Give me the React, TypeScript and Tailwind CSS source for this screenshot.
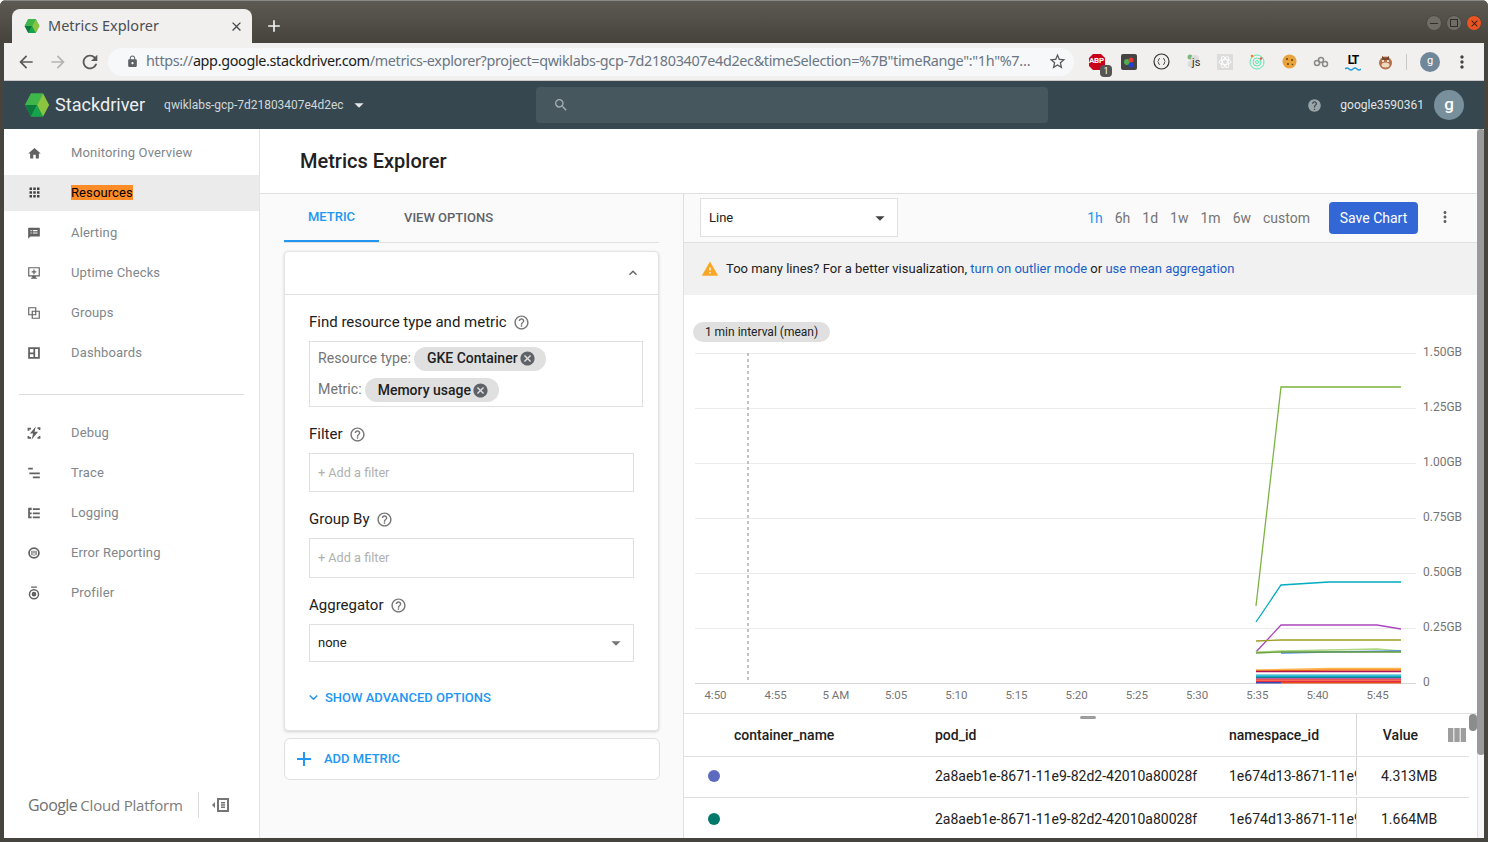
import React from "react";
import { MdHome, MdApps, MdArrowDropDown, MdHelp, MdHelpOutline, MdSearch, MdCancel, MdExpandLess, MdExpandMore, MdAdd, MdMoreVert, MdWarning, MdViewColumn, MdArrowBack, MdArrowForward, MdRefresh, MdLock, MdStarBorder, MdClose } from "react-icons/md";

const Cube = ({ s }: { s: number }) => (
  <svg width={s} height={s} viewBox="0 0 26 26">
    <polygon points="7,1.5 19,1.5 25,13 19,24.5 7,24.5 1,13" fill="#34a853" />
    <polygon points="13,13 19,1.5 25,13 19,24.5" fill="#8bc53f" />
    <polygon points="1,13 7,1.5 19,1.5 13,13" fill="#3fb54a" />
    <polygon points="1,13 13,13 7,24.5" fill="#0b7a3e" />
    <polygon points="7,24.5 13,13 19,24.5" fill="#16a34a" />
  </svg>
);

const G = ({ d }: { d: string }) => (
  <svg width="14" height="14" viewBox="0 0 24 24" fill="#616161" fillRule="evenodd"><path d={d} /></svg>
);

const navTop: [string, React.ReactNode][] = [
  ["Monitoring Overview", <MdHome size={15} color="#616161" />],
  ["Resources", <MdApps size={15} color="#424242" />],
  ["Alerting", <G d="M3 3h18a1 1 0 0 1 1 1v13a1 1 0 0 1-1 1H6l-4 4V4a1 1 0 0 1 1-1zM6 7v2h2V7zM10 7v2h8V7zM6 11v2h2v-2zM10 11v2h8v-2z" />],
  ["Uptime Checks", <G d="M2 2h20v16h-7v2h2v2H7v-2h2v-2H2zM4 4v12h16V4zM11 6h2v3h3v2h-3v3h-2v-3H8V9h3z" />],
  ["Groups", <G d="M2 2h14v6h6v14H8v-6H2zM4 4v10h4V8h6V4zM10 10v4h4v-4zM16 10v6h-6v4h10V10z" />],
  ["Dashboards", <G d="M2 2h20v20H2zM5 5v6h6V5zM5 14v5h6v-5zM14 5v14h5V5z" />],
];
const navBottom: [string, React.ReactNode][] = [
  ["Debug", <G d="M15 1 5 13h5.500L8 23l11-13h-6zM1 3h6v3H4v2H1zM18 2h5v5h-3V5h-2zM1 17h3v2h3v3H1zM20 17h3v5h-5v-3h2z" />],
  ["Trace", <G d="M2 3h8v3H2zM4 11h18v3H4zM10 18h12v3H10z" />],
  ["Logging", <G d="M2 3h6v4H5v4h3v3H5v4h3v3H2zM10 4h12v3H10zM10 11h12v3H10zM10 18h12v3H10z" />],
  ["Error Reporting", <G d="M12 2a10 10 0 1 1 0 20 10 10 0 0 1 0-20zm0 3a7 7 0 1 0 0 14 7 7 0 0 0 0-14zM11 8h2v5h-2zM11 14.500h2v2h-2zM7.500 8h2v8h-2zM14.500 8h2v8h-2z" />],
  ["Profiler", <G d="M7 1h10v2H7zM12 5a9 9 0 1 1 0 18 9 9 0 0 1 0-18zm0 2.500a6.500 6.500 0 1 0 0 13 6.500 6.500 0 0 0 0-13zM12 10a4 4 0 1 1 0 8 4 4 0 0 1 0-8z" />],
];

const NavItem = ({ label, icon }: { label: string; icon: React.ReactNode }) => {
  const active = label === "Resources";
  return (
    <div className={active ? "h-9 my-0.5 pb-[2px] flex items-center bg-[#ebebeb]" : "h-10 flex items-center"}>
      <div className="w-[67px] pl-[23px] flex shrink-0">{icon}</div>
      {active ? (
        <span className="bg-[#ff8c27] text-black leading-[15px] text-[13px] tracking-[0.1px]">{label}</span>
      ) : (
        <span className="text-[#80868b] text-[13px] tracking-[0.15px]">{label}</span>
      )}
    </div>
  );
};

const Help = () => <MdHelpOutline size={17} color="#757575" className="ml-[6px]" />;

const Chip = ({ label }: { label: string }) => (
  <span className="h-6 rounded-full bg-[#e0e0e0] pl-[13px] pr-[10px] flex items-center text-[14px] text-[#212121] ml-[3px] [font-weight:500]">
    {label}
    <MdCancel size={17} color="#5f6368" className="ml-[1px]" />
  </span>
);

const FieldBox = ({ text, h }: { text: string; h: string }) => (
  <div className={`w-[325px] ${h} bg-white border border-[#e0e0e0] flex items-center pl-2 text-[12.700px] text-[#b0b0b0]`}>{text}</div>
);

const Ext = ({ children }: { children: React.ReactNode }) => (
  <div className="w-8 h-5 flex items-center justify-center relative">{children}</div>
);

const yLabels = ["1.50GB", "1.25GB", "1.00GB", "0.75GB", "0.50GB", "0.25GB", "0"];
const xLabels = ["4:50", "4:55", "5 AM", "5:05", "5:10", "5:15", "5:20", "5:25", "5:30", "5:35", "5:40", "5:45"];
const stack = ["#26a69a", "#29b6f6", "#00acc1", "#00897b", "#5c6bc0", "#ec407a", "#e53935", "#ff7043", "#d81b60", "#f4511e"];

const Chart = () => (
  <svg width="793" height="371" viewBox="684 342 793 371" className="block">
    {[353, 408, 463, 518, 573, 628].map((y) => (
      <line key={y} x1="695" x2="1416" y1={y + 0.5} y2={y + 0.5} stroke="#ececec" />
    ))}
    <line x1="695" x2="1416" y1="683.5" y2="683.5" stroke="#d6d6d6" />
    <line x1="748" x2="748" y1="353" y2="683" stroke="#b0b0b0" strokeWidth="1.500" strokeDasharray="3 3" />
    {yLabels.map((t, i) => (
      <text key={t} x="1423" y={356 + i * 55} fontSize="12" fill="#757575" fontFamily="Roboto">{t}</text>
    ))}
    {xLabels.map((t, i) => (
      <text key={t} x={715.5 + i * 60.2} y="699" fontSize="11.500" fill="#757575" fontFamily="Roboto" textAnchor="middle">{t}</text>
    ))}
    <g fill="none" strokeWidth="1.300">
      <polyline points="1256,606 1281,387 1401,387" stroke="#7cb342" />
      <polyline points="1256,622 1281,585 1329,582 1401,582" stroke="#00acc1" />
      <polyline points="1256,652 1281,625 1377,625 1401,629" stroke="#ab47bc" />
      <polyline points="1256,641 1281,640 1401,640" stroke="#9e9d24" />
      <polyline points="1256,652 1281,651 1377,649 1401,651" stroke="#aed581" />
      <polyline points="1281,653 1329,652 1401,651" stroke="#4285f4" />
      <polyline points="1256,653 1281,652 1329,652 1401,652" stroke="#689f38" />
      <polyline points="1256,670 1329,668.500 1401,668.500" stroke="#ffb74d" />
      <polyline points="1256,671 1329,670 1401,670" stroke="#f57c00" />
      <polyline points="1256,671.500 1401,671.500" stroke="#ad1457" />
    </g>
    {stack.map((c, i) => (
      <rect key={c} x="1256" y={674.5 + i * 0.8} width="145" height="1.100" fill={c} />
    ))}
    <rect x="1256" y="682" width="25" height="1.500" fill="#3949ab" />
    <rect x="1281" y="682" width="120" height="1.500" fill="#e64a19" />
  </svg>
);

const rows: [string, string, string][] = [
  ["#5c6bc0", "4.313MB", "h-[41px] pb-[2px]"],
  ["#00796b", "1.664MB", "h-[43px]"],
];

export default function App() {
  return (
    <div className="w-[1488px] h-[842px] overflow-hidden flex flex-col bg-[#46443e] [font-family:Roboto,sans-serif] rounded-t-md">
      {/* title bar */}
      <div className="h-[43px] shrink-0 flex items-end bg-gradient-to-b from-[#5c5a52] to-[#45433c] border-t border-[#8a8a86] pl-3 pr-[6px] relative">
        <div className="w-[240px] h-[34px] bg-[#f1f0ef] rounded-t-lg flex items-center pl-3 pr-2">
          <Cube s={16} />
          <span className="ml-2 text-[14.500px] text-[#4a4f55] [font-family:'Noto_Sans',sans-serif] flex-1">Metrics Explorer</span>
          <MdClose size={15} color="#45474a" />
        </div>
        <MdAdd size={20} color="#f2f2f2" className="ml-3 mb-[7px]" />
        <div className="flex-1" />
        <div className="flex items-center gap-[4px] mb-[12px]">
          <span className="w-4 h-4 rounded-full bg-[#6f6d66] border border-[#4a4842] flex items-center justify-center"><span className="w-2 h-px bg-[#2f2e2a]" /></span>
          <span className="w-4 h-4 rounded-full bg-[#6f6d66] border border-[#4a4842] flex items-center justify-center"><span className="w-2 h-2 border border-[#2f2e2a]" /></span>
          <span className="w-4 h-4 rounded-full bg-[#e95420] border border-[#4a4842] flex items-center justify-center"><MdClose size={11} color="#3b2417" /></span>
        </div>
      </div>

      <div className="flex-1 mx-1 mb-1 flex flex-col min-h-0 bg-white overflow-hidden">
        {/* browser toolbar */}
        <div className="h-[38px] shrink-0 bg-[#f1f0ef] border-b border-[#c9c9c9] flex items-center">
          <MdArrowBack size={20} color="#5a5a5a" className="ml-3" />
          <MdArrowForward size={20} color="#b4b4b4" className="ml-3" />
          <MdRefresh size={22} color="#5a5a5a" className="ml-[11px]" />
          <div className="ml-[7px] w-[966px] h-7 rounded-full bg-[#f7f8fa] flex items-center pl-[18px] text-[14.400px] [font-family:'Noto_Sans',sans-serif] overflow-hidden whitespace-nowrap">
            <MdLock size={13} color="#5f6368" className="shrink-0" />
            <span className="ml-[7px] mb-[2px] w-[888px] overflow-hidden text-[#6b7683] tracking-[-0.340px]">
              https://<span className="text-[#1c1c1c]">app.google.stackdriver.com</span>/metrics-explorer?project=qwiklabs-gcp-7d21803407e4d2ec&amp;timeSelection=%7B"timeRange":"1h"%7…
            </span>
            <MdStarBorder size={19} color="#5a5a5a" className="ml-[14px] shrink-0" />
          </div>
          <div className="flex items-center ml-[7px]">
            <Ext>
              <svg width="18" height="18" viewBox="0 0 18 18"><polygon points="5,1 13,1 17,5 17,13 13,17 5,17 1,13 1,5" fill="#c8001a" /></svg>
              <span className="absolute top-[4px] left-[8px] text-[8px] leading-[10px] font-bold text-white tracking-[-0.300px]">ABP</span>
              <span className="absolute -bottom-[5px] right-[1px] w-3 h-3 rounded-sm bg-[#555] text-white text-[9px] leading-3 text-center">1</span>
            </Ext>
            <Ext>
              <svg width="16" height="16" viewBox="0 0 16 16"><rect width="16" height="16" rx="2" fill="#444" /><circle cx="6" cy="8" r="3" fill="#4caf50" /><circle cx="10" cy="6" r="2.500" fill="#e53935" /><circle cx="10" cy="11" r="2.500" fill="#1e40d8" /></svg>
            </Ext>
            <Ext>
              <svg width="17" height="17" viewBox="0 0 17 17" fill="none" stroke="#333"><circle cx="8.500" cy="8.500" r="7.500" strokeWidth="1.200" /><path d="M7 5.500q-1.500 0-1.500 1.500v.8l-.8.7.8.7v.8q0 1.500 1.500 1.500M10 5.500q1.500 0 1.500 1.500v.8l.8.7-.8.7v.8q0 1.500-1.500 1.500" strokeWidth=".8" /></svg>
            </Ext>
            <Ext>
              <svg width="12" height="15" viewBox="0 0 12 15"><circle cx="3" cy="3" r="2.500" fill="#7cb97c" /><circle cx="8" cy="5" r="4" fill="#ddd" /><circle cx="4" cy="10" r="3.500" fill="#ddd" /></svg>
              <span className="absolute left-[15px] top-[3px] text-[11px] leading-4 text-[#333]">js</span>
            </Ext>
            <Ext>
              <svg width="16" height="16" viewBox="0 0 16 16" fill="none"><rect width="16" height="16" fill="#dcdcdc" /><g stroke="#fff" strokeWidth=".9"><ellipse cx="8" cy="8" rx="6" ry="2.500" /><ellipse cx="8" cy="8" rx="6" ry="2.500" transform="rotate(60 8 8)" /><ellipse cx="8" cy="8" rx="6" ry="2.500" transform="rotate(120 8 8)" /></g></svg>
            </Ext>
            <Ext>
              <svg width="16" height="16" viewBox="0 0 16 16" fill="none" stroke="#5fe6b0" strokeWidth="1"><circle cx="8" cy="8" r="7" /><circle cx="8" cy="8" r="4" /><circle cx="8" cy="8" r="1.500" /><circle cx="3" cy="2" r="1.300" fill="#f58020" stroke="none" /><circle cx="12" cy="4.500" r="1.300" fill="#ef5350" stroke="none" /></svg>
            </Ext>
            <Ext>
              <svg width="15" height="15" viewBox="0 0 15 15"><circle cx="7.500" cy="7.500" r="7" fill="#e8a33d" /><g fill="#6b3f12"><circle cx="5" cy="5" r="1" /><circle cx="10" cy="6" r="1" /><circle cx="6" cy="10" r="1" /><circle cx="10.500" cy="10.500" r=".8" /></g></svg>
            </Ext>
            <Ext>
              <svg width="16" height="12" viewBox="0 0 16 12" fill="none" stroke="#8a8a8a" strokeWidth="1.500"><circle cx="4" cy="7" r="2.500" /><circle cx="8" cy="4" r="2.500" /><circle cx="12" cy="8" r="2.500" /></svg>
            </Ext>
            <Ext>
              <span className="text-[12px] leading-3 font-bold text-black -mt-1 tracking-[-1px]">LT</span>
              <svg width="16" height="4" viewBox="0 0 16 4" className="absolute bottom-[1px] left-2" fill="none" stroke="#1d9bd8" strokeWidth="1.300"><path d="M0 2q2-2 4 0t4 0 4 0 4 0" /></svg>
            </Ext>
            <Ext>
              <svg width="15" height="16" viewBox="0 0 15 16"><circle cx="7.500" cy="9" r="6.500" fill="#b5714a" /><path d="M4 2l3.500 2L11 2v4H4z" fill="#7a4a2c" /><ellipse cx="7.500" cy="11" rx="4" ry="2.500" fill="#f0d9c0" /><circle cx="5" cy="7" r="1" fill="#fff" /><circle cx="10" cy="7" r="1" fill="#fff" /></svg>
            </Ext>
          </div>
          <div className="w-px h-4 bg-[#c8c8c8] ml-[5px]" />
          <span className="w-5 h-5 rounded-full bg-[#70879a] ml-[13px] text-white text-[11px] flex items-center justify-center">g</span>
          <MdMoreVert size={20} color="#444" className="ml-[12px]" />
        </div>

        {/* app header */}
        <div className="h-12 shrink-0 bg-[#37474f] flex items-center text-white relative">
          <div className="ml-5 flex items-center"><Cube s={26} /></div>
          <span className="ml-[5px] text-[18.100px] text-[#eceff1]">Stackdriver</span>
          <span className="ml-[19px] pt-[2px] text-[11.950px] text-[#cfd8dc]">qwiklabs-gcp-7d21803407e4d2ec</span>
          <MdArrowDropDown size={22} color="#e4e8ea" className="ml-[4px]" />
          <div className="ml-[166px] w-[512px] h-9 rounded-sm bg-[#47575e] flex items-center pl-[17px]">
            <MdSearch size={16} color="#a6b0b5" />
          </div>
          <div className="flex-1" />
          <MdHelp size={15} color="#9aa5aa" />
          <span className="ml-[18px] text-[12px] text-[#dfe4e6]">google3590361</span>
          <span className="ml-[10px] mr-5 w-[30px] h-[30px] rounded-full bg-[#78909c] text-white text-[17px] font-medium flex items-center justify-center">g</span>
        </div>

        <div className="flex-1 flex min-h-0">
          {/* sidebar */}
          <aside className="w-[256px] shrink-0 border-r border-[#e4e4e4] flex flex-col pt-1">
            {navTop.map(([l, i]) => <NavItem key={l} label={l} icon={i} />)}
            <div className="mx-[15px] mt-[21px] mb-[18px] border-t border-[#dcdcdc]" />
            {navBottom.map(([l, i]) => <NavItem key={l} label={l} icon={i} />)}
            <div className="flex-1" />
            <div className="h-[26px] mb-5 ml-6 flex items-center text-[#6f6f6f]">
              <span className="text-[16px] tracking-[-0.550px] [font-family:'Open_Sans',sans-serif]">Google</span>
              <span className="ml-[3px] text-[15px] [font-family:'Open_Sans',sans-serif] tracking-[-0.200px] text-[#7b7b7b]">Cloud Platform</span>
              <span className="w-px h-[26px] bg-[#dcdcdc] ml-[15px]" />
              <svg width="18" height="16" viewBox="0 0 18 16" className="ml-[13px]" fill="#757575" fillRule="evenodd"><path d="M0 8l3-3v6zM5 1h12v14H5zM7 3v10h8V3zM9 5h4v1.500H9zM9 7.300h4v1.500H9zM9 9.600h4v1.500H9z" /></svg>
            </div>
          </aside>

          <div className="flex-1 flex flex-col min-w-0 relative">
            <div className="flex-1 flex flex-col min-h-0 mr-[7px]">
              <div className="h-[65px] shrink-0 flex items-center pl-10 border-b border-[#e0e0e0] shadow-[0_1px_0_#f2f2f2]">
                <h1 className="text-[20px] font-medium text-[#212121]">Metrics Explorer</h1>
              </div>
              <div className="flex-1 flex min-h-0">
                {/* metric column */}
                <div className="w-[424px] shrink-0 bg-[#fafafa] border-r border-[#e0e0e0] pl-6 flex flex-col">
                  <div className="w-[375px] h-[49px] shrink-0 border-b border-[#e0e0e0] flex text-[13px] font-medium">
                    <div className="w-[95px] h-[48px] border-b-2 border-[#2196f3] text-[#2196f3] flex items-center justify-center">METRIC</div>
                    <div className="ml-[25px] h-[48px] text-[#5f6368] flex items-center">VIEW OPTIONS</div>
                  </div>
                  <div className="w-[375px] h-[480px] mt-2 shrink-0 bg-white rounded-sm border border-[#e3e3e3] shadow-[0_1px_3px_rgba(0,0,0,0.16)] flex flex-col">
                    <div className="h-[43px] shrink-0 border-b border-[#e0e0e0] flex items-center justify-end pr-[17px]">
                      <MdExpandLess size={16} color="#5f6368" />
                    </div>
                    <div className="pl-6 pt-[17px] flex-1 flex flex-col text-[15px] text-[#212121]">
                      <div className="flex items-center h-5">Find resource type and metric<Help /></div>
                      <div className="w-[334px] h-[66px] mt-[9px] -mr-2 border border-[#e0e0e0] pl-[3px] flex flex-col text-[14.200px] text-[#757575]">
                        <div className="h-[32px] flex items-center pl-[5px] pt-[1px]">Resource type:<Chip label="GKE Container" /></div>
                        <div className="h-[32px] flex items-center pl-[5px]">Metric:<Chip label="Memory usage" /></div>
                      </div>
                      <div className="flex items-center h-5 mt-[17px]">Filter<Help /></div>
                      <div className="mt-[9px]"><FieldBox text="+ Add a filter" h="h-[39px]" /></div>
                      <div className="flex items-center h-5 mt-[17px]">Group By<Help /></div>
                      <div className="mt-[9px]"><FieldBox text="+ Add a filter" h="h-[40px]" /></div>
                      <div className="flex items-center h-5 mt-[17px]">Aggregator<Help /></div>
                      <div className="mt-[9px] w-[325px] h-[38px] border border-[#e0e0e0] flex items-center justify-between pl-2 pr-[6px] text-[13px] text-[#212121]">
                        none<MdArrowDropDown size={22} color="#757575" />
                      </div>
                      <div className="mt-[26px] -ml-[4px] flex items-center text-[13px] font-medium text-[#2196f3]">
                        <MdExpandMore size={17} color="#2196f3" /><span className="ml-[3px]">SHOW ADVANCED OPTIONS</span>
                      </div>
                    </div>
                  </div>
                  <div className="w-[376px] h-[42px] mt-[7px] shrink-0 bg-white rounded-md border border-[#e0e0e0] flex items-center pl-[7px] text-[13px] font-medium text-[#2196f3]">
                    <MdAdd size={24} color="#2196f3" /><span className="ml-[8px]">ADD METRIC</span>
                  </div>
                </div>

                {/* chart column */}
                <div className="flex-1 flex flex-col min-w-0 min-h-0">
                  <div className="h-[49px] shrink-0 bg-[#fafafa] border-b border-[#e0e0e0] flex items-center pl-4">
                    <div className="w-[198px] h-[39px] mb-px bg-white border border-[#e0e0e0] flex items-center justify-between pl-2 pr-[6px] text-[13px] text-[#212121]">
                      Line<MdArrowDropDown size={22} color="#424242" />
                    </div>
                    <div className="flex-1" />
                    <div className="flex items-center gap-[12px] text-[14px] text-[#757575]">
                      <span className="text-[#2196f3]">1h</span><span>6h</span><span>1d</span><span>1w</span><span>1m</span><span>6w</span><span>custom</span>
                    </div>
                    <button className="ml-[19px] w-[89px] h-8 rounded-sm bg-[#3367d6] text-white text-[14px]">Save Chart</button>
                    <MdMoreVert size={18} color="#616161" className="ml-[18px] mr-[23px] mb-[2px]" />
                  </div>
                  <div className="h-[52px] shrink-0 bg-[#f1f1f1] flex items-center pl-[17px] text-[13px] text-[#212121]">
                    <MdWarning size={18} color="#f9a825" />
                    <span className="ml-[7px]">Too many lines? For a better visualization, <span className="text-[#1a5fc8]">turn on outlier mode</span> or <span className="text-[#1a5fc8]">use mean aggregation</span></span>
                  </div>
                  <div className="h-[418px] shrink-0 pt-[27px] pl-[9px]">
                    <div className="w-[137px] h-5 rounded-full bg-[#e0e0e0] text-[12px] text-[#212121] flex items-center justify-center">1 min interval (mean)</div>
                    <div className="-ml-[9px]"><Chart /></div>
                  </div>
                  {/* table */}
                  <div className="flex-1 min-h-0 border-t border-[#e0e0e0] relative text-[14px] overflow-hidden">
                    <div className="absolute top-[2px] left-[396px] w-4 h-[3px] rounded-full bg-[#9e9e9e]" />
                    <div className="flex h-[43px] border-b border-[#e0e0e0] mr-2 font-medium text-[#212121]">
                      <div className="w-[50px]" />
                      <div className="w-[201px] flex items-center">container_name</div>
                      <div className="w-[294px] flex items-center">pod_id</div>
                      <div className="w-[127px] flex items-center">namespace_id</div>
                      <div className="flex-1 border-l border-[#d6d6d6] flex items-center pl-[26px]">Value
                        <MdViewColumn size={24} color="#9e9e9e" className="ml-[27px]" />
                      </div>
                    </div>
                    {rows.map(([c, v, h]) => (
                      <div key={v} className={`flex ${h} border-b border-[#e0e0e0] mr-2 text-[#212121]`}>
                        <div className="w-[50px] flex items-center pl-6"><span className="w-3 h-3 rounded-full" style={{ background: c }} /></div>
                        <div className="w-[201px]" />
                        <div className="w-[294px] flex items-center">2a8aeb1e-8671-11e9-82d2-42010a80028f</div>
                        <div className="w-[127px] flex items-center overflow-hidden whitespace-nowrap">1e674d13-8671-11e9</div>
                        <div className="flex-1 border-l border-[#d6d6d6] flex items-center pl-6">{v}</div>
                      </div>
                    ))}
                    <div className="absolute right-0 top-0 w-2 h-[17px] bg-[#8c8c8c] rounded-md" />
                  </div>
                </div>
              </div>
            </div>
            {/* page scrollbar */}
            <div className="absolute right-0 top-0 bottom-0 w-[7px] bg-[#f7f7f7] border-l border-[#e0e0e0]">
              <div className="h-[626px] -ml-px w-[8px] bg-[#9a9a9a] rounded-t-sm rounded-b-sm" />
            </div>
          </div>
        </div>
      </div>
    </div>
  );
}
